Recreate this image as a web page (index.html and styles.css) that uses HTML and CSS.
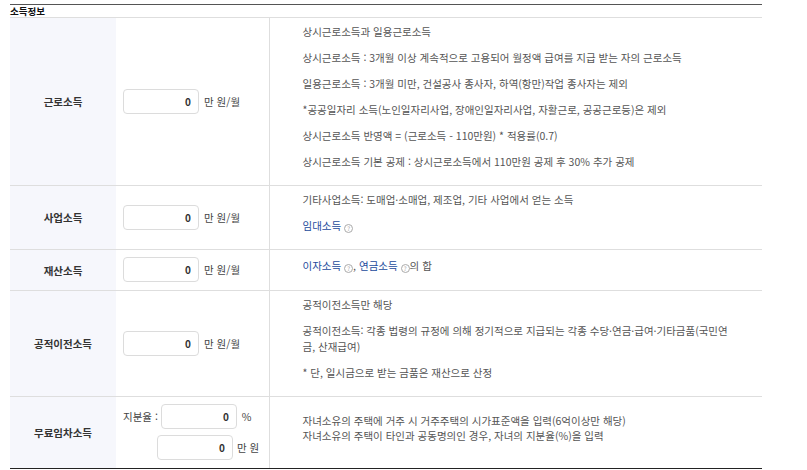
FILE: index.html
```html
<!DOCTYPE html>
<html lang="ko">
<head>
<meta charset="utf-8">
<title>소득정보</title>
<link rel="stylesheet" href="styles.css">
</head>
<body>
<div class="wrap">
  <div class="title">소득정보</div>
  <table class="income">
    <colgroup><col class="c-label"><col class="c-input"><col class="c-desc"></colgroup>
    <tbody>
      <tr>
        <th>근로소득</th>
        <td class="inp"><div class="field"><input type="text" value="0"><span class="unit">만 원/월</span></div></td>
        <td class="desc">
          <p>상시근로소득과 일용근로소득</p>
          <p>상시근로소득 : 3개월 이상 계속적으로 고용되어 월정액 급여를 지급 받는 자의 근로소득</p>
          <p>일용근로소득 : 3개월 미만, 건설공사 종사자, 하역(항만)작업 종사자는 제외</p>
          <p>*공공일자리 소득(노인일자리사업, 장애인일자리사업, 자활근로, 공공근로등)은 제외</p>
          <p>상시근로소득 반영액 = (근로소득 - 110만원) * 적용률(0.7)</p>
          <p>상시근로소득 기본 공제 : 상시근로소득에서 110만원 공제 후 30% 추가 공제</p>
        </td>
      </tr>
      <tr>
        <th>사업소득</th>
        <td class="inp"><div class="field"><input type="text" value="0"><span class="unit">만 원/월</span></div></td>
        <td class="desc">
          <p>기타사업소득: 도매업·소매업, 제조업, 기타 사업에서 얻는 소득</p>
          <p><a class="link">임대소득</a> <span class="help">?</span></p>
        </td>
      </tr>
      <tr>
        <th>재산소득</th>
        <td class="inp"><div class="field"><input type="text" value="0"><span class="unit">만 원/월</span></div></td>
        <td class="desc">
          <p><a class="link">이자소득</a> <span class="help">?</span>, <a class="link">연금소득</a> <span class="help">?</span>의 합</p>
        </td>
      </tr>
      <tr>
        <th>공적이전소득</th>
        <td class="inp"><div class="field"><input type="text" value="0"><span class="unit">만 원/월</span></div></td>
        <td class="desc">
          <p>공적이전소득만 해당</p>
          <p>공적이전소득: 각종 법령의 규정에 의해 정기적으로 지급되는 각종 수당·연금·급여·기타금품(국민연<br>금, 산재급여)</p>
          <p>* 단, 일시금으로 받는 금품은 재산으로 산정</p>
        </td>
      </tr>
      <tr class="last">
        <th>무료임차소득</th>
        <td class="inp">
          <div class="field"><span class="pre">지분율 :</span><input type="text" value="0"><span class="unit">%</span></div>
          <div class="field second"><input type="text" value="0"><span class="unit">만 원</span></div>
        </td>
        <td class="desc">
          <p class="tight">자녀소유의 주택에 거주 시 거주주택의 시가표준액을 입력(6억이상만 해당)<br>자녀소유의 주택이 타인과 공동명의인 경우, 자녀의 지분율(%)을 입력</p>
        </td>
      </tr>
    </tbody>
  </table>
</div>
</body>
</html>
```

FILE: styles.css
```css
html, body {
  margin: 0;
  padding: 0;
  background: #fff;
}
body {
  padding: 4px 0 0 10px;
  font-family: "Noto Sans CJK KR", "Noto Sans", sans-serif;
  font-size: 10.5px;
  color: #555;
}
.wrap {
  width: 752px;
}
.title {
  border-top: 1px solid #555;
  height: 12px;
  line-height: 12px;
  font-size: 9.5px;
  font-weight: 700;
  color: #111;
}
.income {
  width: 752px;
  table-layout: fixed;
  border-collapse: collapse;
  border-top: 1px solid #dedede;
}
.c-label { width: 106px; }
.c-input { width: 153px; }
.income th,
.income td {
  border-bottom: 1px solid #dedede;
  vertical-align: middle;
  padding: 0;
}
.income tr.last th,
.income tr.last td {
  border-bottom: 1px solid #222;
}
.income th {
  background: #f6f7fc;
  color: #333;
  font-weight: 700;
  font-size: 10.5px;
  text-align: center;
}
.income td.inp {
  border-right: 1px solid #dedede;
  padding: 7px 7px 8px;
  white-space: nowrap;
}
.field {
  display: flex;
  align-items: center;
  gap: 5px;
  color: #444;
}
.field .pre {
  margin-right: -2px;
}
.field.second {
  margin-top: 6px;
  margin-left: 34px;
  gap: 4px;
}
.field input {
  box-sizing: border-box;
  width: 76px;
  height: 25px;
  margin: 0;
  border: 1px solid #dcdcdc;
  border-radius: 4px;
  padding: 0 7px;
  text-align: right;
  font-family: "Noto Sans CJK KR", "Noto Sans", sans-serif;
  font-size: 10px;
  font-weight: 700;
  color: #333;
  background: #fff;
}
.income td.desc {
  padding: 6px 0 5px 33px;
}
.desc p {
  margin: 0 0 10px;
  line-height: 16px;
}
.desc p.tight {
  line-height: 15px;
}
.link {
  color: #234b9c;
  text-decoration: none;
}
.help {
  display: inline-block;
  box-sizing: border-box;
  width: 9px;
  height: 9px;
  border: 1px solid #aaa;
  border-radius: 50%;
  font-size: 6px;
  line-height: 7px;
  text-align: center;
  color: #999;
  vertical-align: -1px;
}
```
